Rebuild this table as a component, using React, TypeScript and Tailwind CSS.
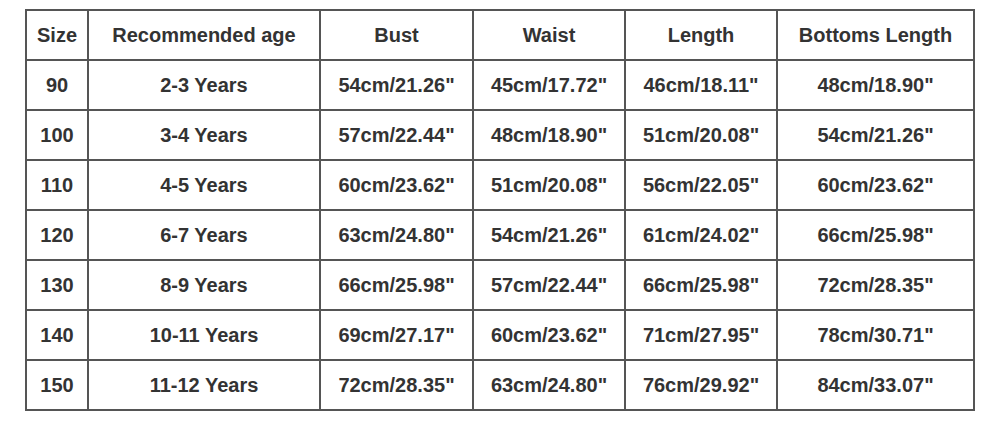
const headers = ["Size", "Recommended age", "Bust", "Waist", "Length", "Bottoms Length"];

const rows = [
  ["90", "2-3 Years", "54cm/21.26\"", "45cm/17.72\"", "46cm/18.11\"", "48cm/18.90\""],
  ["100", "3-4 Years", "57cm/22.44\"", "48cm/18.90\"", "51cm/20.08\"", "54cm/21.26\""],
  ["110", "4-5 Years", "60cm/23.62\"", "51cm/20.08\"", "56cm/22.05\"", "60cm/23.62\""],
  ["120", "6-7 Years", "63cm/24.80\"", "54cm/21.26\"", "61cm/24.02\"", "66cm/25.98\""],
  ["130", "8-9 Years", "66cm/25.98\"", "57cm/22.44\"", "66cm/25.98\"", "72cm/28.35\""],
  ["140", "10-11 Years", "69cm/27.17\"", "60cm/23.62\"", "71cm/27.95\"", "78cm/30.71\""],
  ["150", "11-12 Years", "72cm/28.35\"", "63cm/24.80\"", "76cm/29.92\"", "84cm/33.07\""],
];

export default function App() {
  return (
    <div className="w-[1000px] h-[421px] bg-white pt-[9px] pl-[25px]" style={{ fontFamily: '"Liberation Sans", Arial, sans-serif' }}>
      {/* size chart: grid gaps act as the cell borders */}
      <div className="inline-grid grid-cols-[60px_230px_151px_150px_150px_195px] auto-rows-[48px] gap-[2px] p-[2px] bg-[#555555]">
        {headers.map((h) => (
          <div key={h} className="bg-white flex items-center justify-center text-[20px] font-bold text-[#333333]">
            {h}
          </div>
        ))}
        {rows.map((r) =>
          r.map((c, i) => (
            <div key={r[0] + i} className="bg-white flex items-center justify-center text-[20px] font-bold text-[#333333]">
              {c}
            </div>
          ))
        )}
      </div>
    </div>
  );
}
